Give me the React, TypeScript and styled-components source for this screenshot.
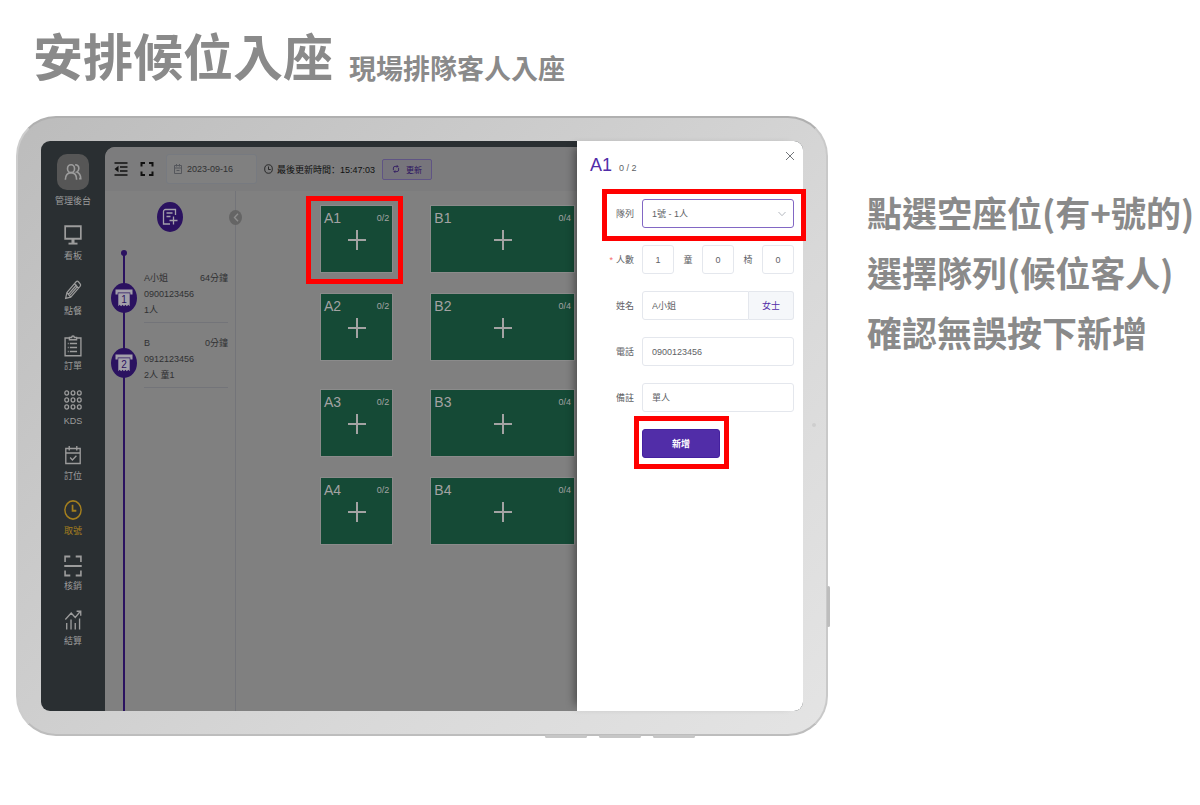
import React from "react";
import styled, { createGlobalStyle, css } from "styled-components";

const ink = {
  caption: "#8a8a8a",
  rail: "#2a2f32",
  railText: "#9c9c9c",
  active: "#a47f1e",
  floor: "#808080",
  toolbar: "#7c7c7d",
  line: "#737479",
  dimText: "#303133",
  tile: "#154a36",
  tileText: "#a3a3a3",
  dimPurple: "#2b1260",
  purple: "#512da8",
  field: "#e4e7ed",
  text: "#606266",
  alert: "#ff0000",
};

const GlobalStyle = createGlobalStyle`
  *, *::before, *::after { box-sizing: border-box; }
  body {
    margin: 0;
    background: #fff;
    font-family: "Liberation Sans", "Noto Sans CJK TC", sans-serif;
    font-size: 9px;
    color: ${ink.text};
  }
  button, input, select { font: inherit; color: inherit; margin: 0; }
  h1, h2, p, ol, ul { margin: 0; padding: 0; list-style: none; font-weight: inherit; }
  svg { display: block; flex: none; }
`;

const Page = styled.div`
  padding: 29px 0 68px 16px;
`;

const Heading = styled.header`
  display: flex;
  align-items: flex-end;
  gap: 16px;
  padding-left: 17px;
  margin-bottom: 37px;
  font-family: "Noto Sans CJK TC", sans-serif;
  font-weight: 700;
  color: ${ink.caption};
`;

const Title = styled.h1`
  font-size: 50px;
  line-height: 50px;
  font-weight: 700;
`;

const Subtitle = styled.p`
  font-size: 27px;
  line-height: 22px;
`;

const Content = styled.main`
  display: grid;
  grid-template-columns: minmax(0, 1fr) 333px;
  gap: 39px;
  align-items: start;
`;

const Steps = styled.ol`
  padding-top: 66px;
  font-family: "Noto Sans CJK TC", sans-serif;
  font-size: 35px;
  line-height: 60px;
  font-weight: 700;
  white-space: nowrap;
  color: ${ink.caption};
`;

const Tablet = styled.section`
  position: relative;
  padding: 23px;
  border: 2px solid;
  border-color: #b0b0b0 #c9c9c9 #bdbdbd #cdcdcd;
  border-radius: 40px;
  background: linear-gradient(135deg, #bcbcbc 0%, #cbcbcb 35%, #d8d8d8 65%, #e4e4e4 100%);
`;

const SideKey = styled.i`
  position: absolute;
  top: 76%;
  right: -4px;
  width: 3px;
  height: 41px;
  border-radius: 2px;
  background: #bdbdbd;
`;

const Camera = styled.i`
  position: absolute;
  top: 305px;
  right: 10px;
  width: 4px;
  height: 4px;
  border-radius: 50%;
  background: #cecece;
`;

const Feet = styled.div`
  position: absolute;
  right: 131px;
  bottom: -4px;
  display: flex;
  gap: 12px;
`;

const Foot = styled.i`
  width: 42px;
  height: 3px;
  border-radius: 2px;
  background: #c6c6c6;
`;

const Screen = styled.div`
  display: grid;
  grid-template-columns: 64px minmax(0, 1fr) 226px;
  border-radius: 9px;
  background: ${ink.rail};
`;

const Rail = styled.nav`
  display: flex;
  flex-direction: column;
  align-items: center;
  gap: 18px;
  padding: 13px 0 64px;
`;

const RailLink = styled.a<{ $active?: boolean }>`
  display: flex;
  flex-direction: column;
  align-items: center;
  gap: 5px;
  line-height: 12px;
  text-decoration: none;
  white-space: nowrap;
  color: ${(p) => (p.$active ? ink.active : ink.railText)};
`;

const Avatar = styled.span`
  display: grid;
  place-items: center;
  width: 32px;
  height: 36px;
  border-radius: 10px;
  background: #565656;
`;

const Workspace = styled.div`
  display: flex;
  flex-direction: column;
  margin-top: 6px;
  border-top-left-radius: 10px;
  background: ${ink.floor};
  color: ${ink.dimText};
`;

const Toolbar = styled.div`
  display: flex;
  align-items: center;
  height: 44px;
  padding-left: 8px;
  border-top-left-radius: 10px;
  background: ${ink.toolbar};
  color: #101010;
`;

const IconButton = styled.button`
  display: grid;
  place-items: center;
  width: 16px;
  height: 16px;
  margin-right: 10px;
  padding: 0;
  border: 0;
  background: none;
`;

const DateBox = styled.label`
  display: flex;
  align-items: center;
  gap: 5px;
  width: 91px;
  height: 30px;
  margin: 0 7px 0 1px;
  padding-left: 7px;
  border: 1px solid #777a80;
  border-radius: 3px;
  background: ${ink.floor};
  color: #55575c;
`;

const DateInput = styled.input`
  width: 60px;
  padding: 0;
  border: 0;
  outline: 0;
  background: none;
  color: ${ink.dimText};
`;

const Updated = styled.p`
  display: flex;
  align-items: center;
  gap: 4px;
  margin-right: 7px;
  font-family: "Liberation Sans", "Noto Sans CJK SC", sans-serif;
  white-space: nowrap;
`;

const Refresh = styled.button`
  display: flex;
  align-items: center;
  justify-content: center;
  gap: 6px;
  width: 50px;
  height: 21px;
  padding: 0;
  border: 1px solid #5f5484;
  border-radius: 2px;
  background: #77757c;
  && { color: ${ink.dimPurple}; }
  font-size: 8px;
  white-space: nowrap;
`;

const Board = styled.div`
  display: grid;
  grid-template-columns: 131px minmax(0, 1fr);
  flex: 1;
`;

const QueuePanel = styled.aside`
  display: flex;
  flex-direction: column;
  border-right: 1px solid ${ink.line};
`;

const QueueHead = styled.div`
  position: relative;
  display: flex;
  justify-content: center;
  height: 62px;
  padding-top: 11px;
`;

const AddButton = styled.button`
  display: grid;
  place-items: center;
  width: 26px;
  height: 30px;
  padding: 0;
  border: 0;
  border-radius: 50%;
  background: ${ink.dimPurple};
  && { color: #a3a0aa; }
`;

const Collapse = styled.button`
  position: absolute;
  top: 19px;
  right: -7px;
  display: grid;
  place-items: center;
  width: 13px;
  height: 15px;
  padding: 0;
  border: 0;
  border-radius: 50%;
  background: #656565;
  && { color: #8e8e8e; }
`;

const Queue = styled.ol`
  position: relative;
  display: flex;
  flex: 1;
  flex-direction: column;
  gap: 12px;
  padding: 17px 7px 0 6px;
  &::before {
    content: "";
    position: absolute;
    top: 0;
    bottom: 0;
    left: 18px;
    width: 2px;
    background: ${ink.dimPurple};
  }
  &::after {
    content: "";
    position: absolute;
    top: -3px;
    left: 16px;
    width: 6px;
    height: 6px;
    border-radius: 50%;
    background: ${ink.dimPurple};
  }
`;

const QueueItem = styled.li`
  position: relative;
  z-index: 1;
  display: flex;
  gap: 7px;
`;

const Ticket = styled.span`
  display: grid;
  place-items: center;
  width: 26px;
  height: 30px;
  margin-top: 13px;
  border-radius: 50%;
  background: ${ink.dimPurple};
`;

const Guest = styled.div`
  flex: 1;
  padding-bottom: 4px;
  border-bottom: 1px solid ${ink.line};
  line-height: 16px;
`;

const GuestTop = styled.p`
  display: flex;
  justify-content: space-between;
`;

const Floor = styled.div`
  display: flex;
  flex-direction: column;
  gap: 30px;
  padding: 15px 3px 0 85px;
`;

const Zone = styled.div`
  display: grid;
  grid-template-columns: 1fr 2fr;
  gap: 22px 39px;
`;

const outline = css`
  content: "";
  position: absolute;
  z-index: 2;
  border: 5px solid ${ink.alert};
  pointer-events: none;
`;

const Tile = styled.button<{ $marked?: boolean }>`
  position: relative;
  display: grid;
  grid-template-columns: 1fr auto;
  grid-template-rows: 24px 1fr;
  align-items: center;
  height: 66px;
  padding: 0 3px;
  border: 0;
  outline: 1px solid #8b8b8b;
  background: ${ink.tile};
  && { color: ${ink.tileText}; }
  text-align: left;
  &::after {
    ${(p) => p.$marked && outline}
    inset: -10px -11px -12px -15px;
  }
`;

const TileName = styled.span`
  font-size: 14px;
`;

const TilePlus = styled.span`
  grid-column: 1 / -1;
  justify-self: center;
  align-self: start;
`;

const Drawer = styled.section`
  position: relative;
  padding: 13px 9px 0 13px;
  border-radius: 0 9px 9px 0;
  background: #fff;
  box-shadow: -8px 0 10px -6px rgba(0, 0, 0, 0.45);
`;

const DrawerHead = styled.header`
  display: flex;
  align-items: baseline;
  gap: 7px;
  height: 45px;
`;

const TableName = styled.h2`
  font-size: 18px;
  line-height: 22px;
  color: ${ink.purple};
`;

const Close = styled.button`
  position: absolute;
  top: 10px;
  right: 8px;
  padding: 0;
  border: 0;
  background: none;
  color: #73767a;
`;

const Form = styled.form`
  display: flex;
  flex-direction: column;
  gap: 17px;
`;

const Row = styled.div<{ $marked?: boolean }>`
  position: relative;
  display: grid;
  grid-template-columns: 44px minmax(0, 1fr);
  gap: 8px;
  align-items: center;
  &::after {
    ${(p) => p.$marked && outline}
    inset: -10px -12px -13px 12px;
  }
`;

const Label = styled.label<{ $required?: boolean }>`
  text-align: right;
  white-space: nowrap;
  &::before {
    content: ${(p) => (p.$required ? '"*"' : "none")};
    margin-right: 3px;
    color: #f56c6c;
  }
`;

const fieldStyle = css`
  width: 100%;
  min-width: 0;
  height: 29px;
  border: 1px solid ${ink.field};
  border-radius: 3px;
  outline: 0;
  background: #fff;
`;

const Input = styled.input<{ $small?: boolean }>`
  ${fieldStyle}
  padding: 0 ${(p) => (p.$small ? 0 : 9)}px;
  text-align: ${(p) => (p.$small ? "center" : "left")};
`;

const SelectBox = styled.div`
  position: relative;
`;

const Select = styled.select`
  ${fieldStyle}
  appearance: none;
  padding: 0 9px;
  border-color: #8267c4;
`;

const Arrow = styled.span`
  position: absolute;
  top: 12px;
  right: 8px;
  color: #b4b8bf;
  pointer-events: none;
`;

const Counts = styled.div`
  display: grid;
  grid-template-columns: 1fr 28px 1fr 28px 1fr;
  align-items: center;
`;

const CountLabel = styled.label`
  text-align: center;
`;

const Joined = styled.div`
  display: grid;
  grid-template-columns: minmax(0, 1fr) 45px;
  & > input { border-radius: 3px 0 0 3px; }
`;

const Gender = styled.button`
  height: 29px;
  padding: 0;
  border: 1px solid ${ink.field};
  border-left: 0;
  border-radius: 0 3px 3px 0;
  background: #f5f7fa;
  && { color: ${ink.purple}; }
`;

const Submit = styled.button`
  position: relative;
  grid-column: 2;
  width: 78px;
  height: 29px;
  padding: 0;
  border: 1px solid #4420a0;
  border-radius: 3px;
  background: ${ink.purple};
  && { color: #fff; }
  font-weight: 700;
  &::after {
    ${outline}
    inset: -14px -10px -12px -9px;
  }
`;

type IconProps = { w?: number; h?: number; sw?: number; box?: string; children: React.ReactNode };

const Icon = ({ w = 18, h = 20, sw = 1.5, box = "0 0 20 20", children }: IconProps) => (
  <svg
    width={w}
    height={h}
    viewBox={box}
    preserveAspectRatio="none"
    fill="none"
    stroke="currentColor"
    strokeWidth={sw}
    aria-hidden="true"
  >
    {children}
  </svg>
);

const icons = {
  people: (
    <Icon h={18} sw={1.8}>
      <ellipse cx="7.8" cy="6.3" rx="3.9" ry="4.4" />
      <path d="M1.500 18.500c0-5 2.500-7.800 6.300-7.800s6.200 2.800 6.200 7.800M12.300 2c2.600 0 4.200 1.800 4.200 4.200 0 1.700-.9 3.100-2.400 3.900 2.800.8 4.300 3.400 4.500 7.200h-1.800" />
    </Icon>
  ),
  monitor: (
    <Icon>
      <path d="M1.300 1.200h17.400v12.600H1.300z" strokeWidth="1.900" />
      <path d="M10 14v4" strokeWidth="3.400" />
      <path d="M5 18.600h10" strokeWidth="1.900" />
    </Icon>
  ),
  pencil: (
    <Icon>
      <path d="M1.800 18.500l1.400-6L13.500 1.800c.8-.8 1.700-.8 2.500 0l1.800 2c.8.8.8 1.700 0 2.600L7.500 17.200zM3.200 12.500l4.300 4.700M11.700 3.700l4.300 4.600M4.900 14.200L14 4.800M6.200 15.600l9-9.400" strokeWidth="1.300" />
    </Icon>
  ),
  clipboard: (
    <Icon h={22} box="0 0 20 22">
      <path d="M6 3H1.200v17.800h17.600V3H14" />
      <path d="M6 4.700V2.400h2.500a1.500 1.500 0 0 1 3 0H14v2.300z" />
      <path d="M6.500 8.500h8M6.500 12.500h8M6.500 16.500h8M4.200 8.500h1M4.200 12.500h1M4.200 16.500h1" />
    </Icon>
  ),
  dots: (
    <Icon>
      {[3, 10, 17].map((y) =>
        [3, 10, 17].map((x) => <circle key={`${x}-${y}`} cx={x} cy={y} r="2.100" strokeWidth="1.400" />),
      )}
    </Icon>
  ),
  calendar: (
    <Icon>
      <path d="M2 3.500h16v15H2zM2 8h16M5.800 1v4.500M14.200 1v4.500" />
      <path d="M6.800 12.500l2.500 2.500 4.500-4.300" />
    </Icon>
  ),
  clock: (
    <Icon>
      <ellipse cx="10" cy="10" rx="9" ry="9.100" strokeWidth="1.600" />
      <path d="M9.500 4.800v6h4.200" strokeWidth="1.900" />
    </Icon>
  ),
  scan: (
    <Icon h={22} box="0 0 20 22" sw={1.8}>
      <path d="M1.200 7V1.500H7M13 1.500h5.800V7M1.200 15.500V20.500H7M13 20.500h5.800v-5M.3 11h19.400" />
    </Icon>
  ),
  chart: (
    <Icon>
      <path d="M1.500 9.500L8 3l4.500 4.500 5.500-6M14 1.300h4.600v4.400M3 13v6.500M7.800 9.500v10M12.500 13v6.500M17.300 8.500v11" />
    </Icon>
  ),
};

const Clock = () => (
  <Icon w={9} h={10} sw={1.6}>
    <circle cx="10" cy="10" r="8.500" />
    <path d="M10 5v6h5" />
  </Icon>
);

const menu = [
  ["看板", icons.monitor],
  ["點餐", icons.pencil],
  ["訂單", icons.clipboard],
  ["KDS", icons.dots],
  ["訂位", icons.calendar],
  ["取號", icons.clock],
  ["核銷", icons.scan],
  ["結算", icons.chart],
] as const;

const MenuIcon = styled.span`
  display: grid;
  place-items: center;
  width: 20px;
  height: 20px;
`;

const guests = [
  { no: 1, name: "A小姐", wait: "64分鐘", phone: "0900123456", party: "1人" },
  { no: 2, name: "B", wait: "0分鐘", phone: "0912123456", party: "2人 童1" },
];

const zones = [
  [["A1", "0/2"], ["B1", "0/4"], ["A2", "0/2"], ["B2", "0/4"]],
  [["A3", "0/2"], ["B3", "0/4"], ["A4", "0/2"], ["B4", "0/4"]],
];

export default function App() {
  return (
    <>
      <GlobalStyle />
      <Page>
        <Heading>
          <Title>安排候位入座</Title>
          <Subtitle>現場排隊客人入座</Subtitle>
        </Heading>
        <Content>
          <Tablet>
            <SideKey />
            <Camera />
            <Feet>
              <Foot />
              <Foot />
              <Foot />
            </Feet>
            <Screen>
              <Rail>
                <RailLink href="#admin">
                  <Avatar>{icons.people}</Avatar>
                  管理後台
                </RailLink>
                {menu.map(([label, icon]) => (
                  <RailLink key={label} href={`#${label}`} $active={label === "取號"}>
                    <MenuIcon>{icon}</MenuIcon>
                    {label}
                  </RailLink>
                ))}
              </Rail>

              <Workspace>
                <Toolbar>
                  <IconButton aria-label="收合選單">
                    <Icon w={14} h={16} box="0 0 14 16" sw={1.7}>
                      <path d="M.5 2h13M6 6h7.500M6 10h7.500M.5 14h13" />
                      <path d="M4.500 4.800v6.400L.5 8z" fill="currentColor" stroke="none" />
                    </Icon>
                  </IconButton>
                  <IconButton aria-label="全螢幕">
                    <Icon w={14} h={16} box="0 0 14 16" sw={2}>
                      <path d="M1.500 5.500V2H5M9 2h3.500v3.500M12.500 10.500V14H9M5 14H1.500v-3.500" />
                    </Icon>
                  </IconButton>
                  <DateBox>
                    <Icon w={8} h={10} box="0 0 8 10" sw={1}>
                      <path d="M.5 1.500h7v8h-7zM.5 4h7M2.500 0v2.500M5.500 0v2.500M2.500 6.500h3" />
                    </Icon>
                    <DateInput aria-label="日期" defaultValue="2023-09-16" />
                  </DateBox>
                  <Updated>
                    <Clock />
                    最後更新時間：15:47:03
                  </Updated>
                  <Refresh>
                    <Icon w={8} h={8} sw={2}>
                      <path d="M3.500 13V7.500a4 4 0 0 1 4-4H15M12 .5l3 3-3 3M16.500 7v5.500a4 4 0 0 1-4 4H5M8 19.500l-3-3 3-3" />
                    </Icon>
                    更新
                  </Refresh>
                </Toolbar>

                <Board>
                  <QueuePanel>
                    <QueueHead>
                      <AddButton aria-label="新增候位">
                        <Icon w={16} h={18} box="0 0 16 18" sw={1.3}>
                          <path d="M13.500 7V1.500h-10a2 2 0 0 0-2 2v12.500H8M4.500 5h6M4.500 8.500h4M11.500 8.500v8M7.500 12.500h8" />
                        </Icon>
                      </AddButton>
                      <Collapse aria-label="收合">
                        <Icon w={6} h={9} box="0 0 6 9" sw={1.4}>
                          <path d="M5 .7L1.500 4.500 5 8.300" />
                        </Icon>
                      </Collapse>
                    </QueueHead>
                    <Queue>
                      {guests.map((g) => (
                        <QueueItem key={g.no}>
                          <Ticket>
                            <svg width="18" height="20" viewBox="0 0 18 20">
                              <path d="M.500 1.500h17v5h-2.200V4.500H2.700v2H.500z" fill="#a3a0aa" />
                              <path d="M3.300 5.300h11.400v13l-1.400-1.600-1.400 1.600-1.500-1.600L9 18.300l-1.400-1.600-1.500 1.600-1.400-1.600-1.400 1.600z" fill="#a3a0aa" />
                              <text x="9" y="14.500" textAnchor="middle" fontSize="10" fill={ink.dimPurple}>
                                {g.no}
                              </text>
                            </svg>
                          </Ticket>
                          <Guest>
                            <GuestTop>
                              <span>{g.name}</span>
                              <span>{g.wait}</span>
                            </GuestTop>
                            <p>{g.phone}</p>
                            <p>{g.party}</p>
                          </Guest>
                        </QueueItem>
                      ))}
                    </Queue>
                  </QueuePanel>

                  <Floor>
                    {zones.map((tiles, i) => (
                      <Zone key={i}>
                        {tiles.map(([name, seats]) => (
                          <Tile key={name} $marked={name === "A1"}>
                            <TileName>{name}</TileName>
                            <span>{seats}</span>
                            <TilePlus>
                              <Icon w={18} h={20} box="0 0 18 20" sw={2}>
                                <path d="M9 0v20M0 10h18" />
                              </Icon>
                            </TilePlus>
                          </Tile>
                        ))}
                      </Zone>
                    ))}
                  </Floor>
                </Board>
              </Workspace>

              <Drawer>
                <DrawerHead>
                  <TableName>A1</TableName>
                  <span>0 / 2</span>
                </DrawerHead>
                <Close aria-label="關閉">
                  <Icon w={10} h={10} box="0 0 10 10" sw={1}>
                    <path d="M1 1l8 8M9 1L1 9" />
                  </Icon>
                </Close>
                <Form onSubmit={(e) => e.preventDefault()}>
                  <Row $marked>
                    <Label htmlFor="queue">隊列</Label>
                    <SelectBox>
                      <Select id="queue">
                        <option>1號 - 1人</option>
                        <option>2號 - 2人</option>
                      </Select>
                      <Arrow>
                        <Icon w={8} h={6} box="0 0 8 6" sw={1}>
                          <path d="M.500 1L4 4.700 7.500 1" />
                        </Icon>
                      </Arrow>
                    </SelectBox>
                  </Row>
                  <Row>
                    <Label htmlFor="adults" $required>
                      人數
                    </Label>
                    <Counts>
                      <Input id="adults" $small defaultValue="1" />
                      <CountLabel htmlFor="kids">童</CountLabel>
                      <Input id="kids" $small defaultValue="0" />
                      <CountLabel htmlFor="chairs">椅</CountLabel>
                      <Input id="chairs" $small defaultValue="0" />
                    </Counts>
                  </Row>
                  <Row>
                    <Label htmlFor="name">姓名</Label>
                    <Joined>
                      <Input id="name" defaultValue="A小姐" />
                      <Gender type="button">女士</Gender>
                    </Joined>
                  </Row>
                  <Row>
                    <Label htmlFor="phone">電話</Label>
                    <Input id="phone" defaultValue="0900123456" />
                  </Row>
                  <Row>
                    <Label htmlFor="note">備註</Label>
                    <Input id="note" defaultValue="單人" />
                  </Row>
                  <Row>
                    <Submit type="submit">新增</Submit>
                  </Row>
                </Form>
              </Drawer>
            </Screen>
          </Tablet>
          <Steps>
            <li>點選空座位(有+號的)</li>
            <li>選擇隊列(候位客人)</li>
            <li>確認無誤按下新增</li>
          </Steps>
        </Content>
      </Page>
    </>
  );
}
